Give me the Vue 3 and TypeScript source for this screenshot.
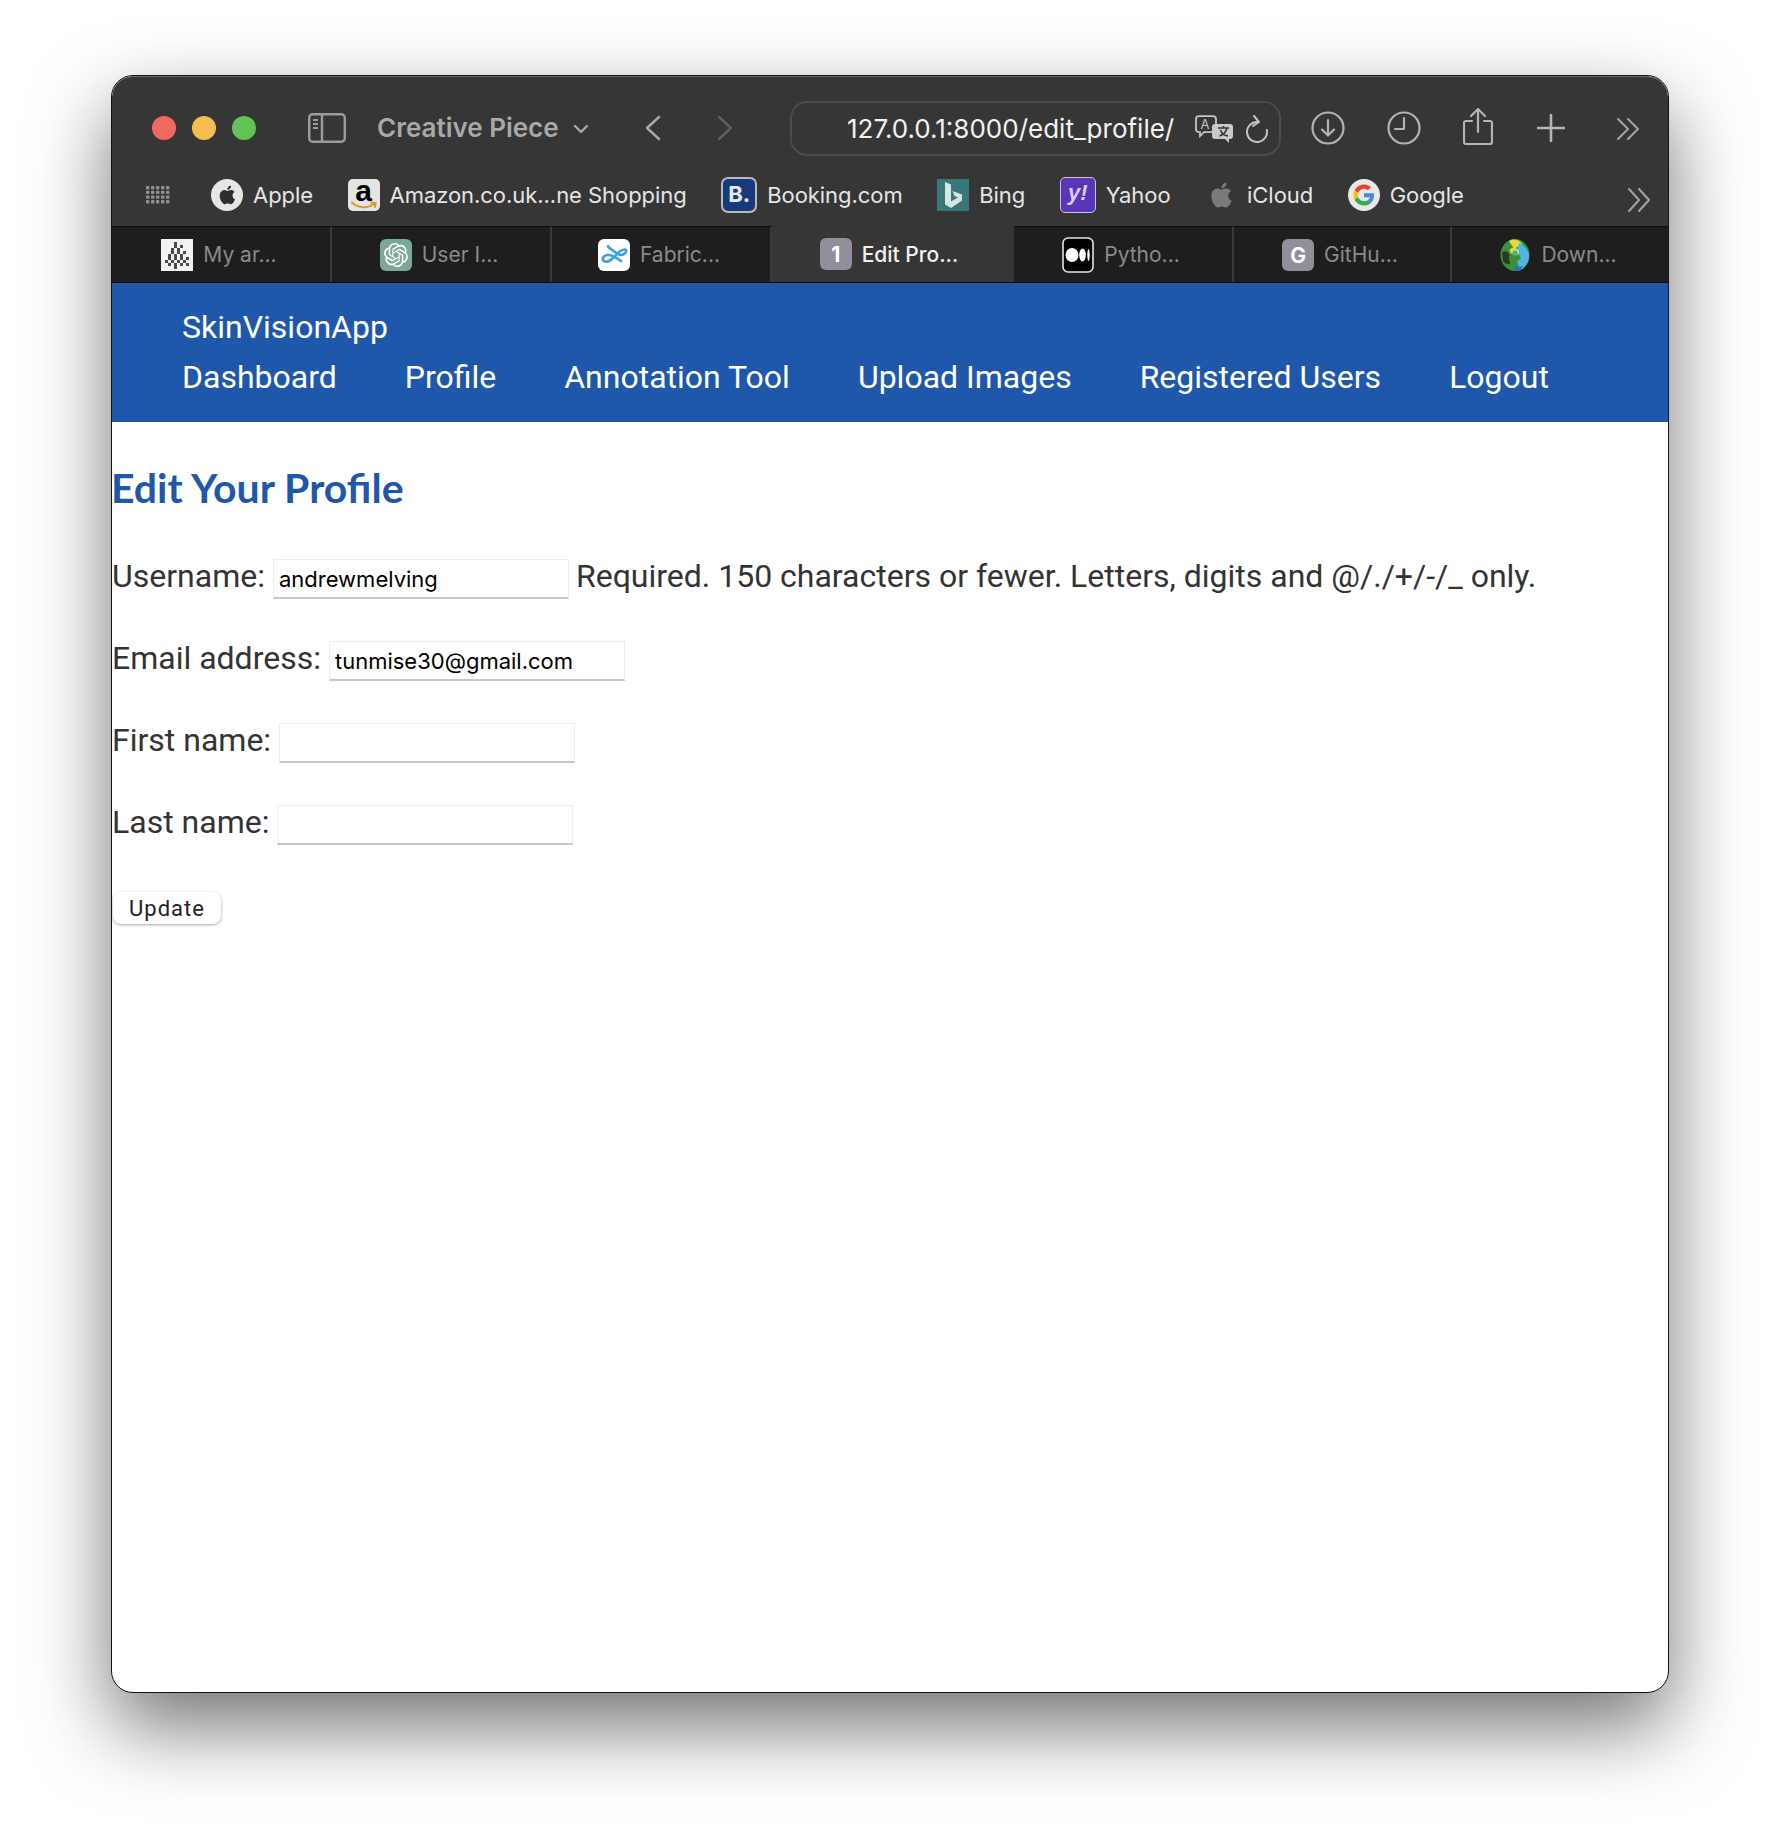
<script setup lang="ts">
const bookmarks = [
  { name: 'Apple', icon: 'apple' },
  { name: 'Amazon.co.uk...ne Shopping', icon: 'amazon' },
  { name: 'Booking.com', icon: 'booking' },
  { name: 'Bing', icon: 'bing' },
  { name: 'Yahoo', icon: 'yahoo' },
  { name: 'iCloud', icon: 'icloud' },
  { name: 'Google', icon: 'google' },
]

const tabs = [
  { name: 'My ar...', icon: 'tree' },
  { name: 'User I...', icon: 'gpt' },
  { name: 'Fabric...', icon: 'fabric' },
  { name: 'Edit Pro...', icon: 'one', active: true },
  { name: 'Pytho...', icon: 'medium' },
  { name: 'GitHu...', icon: 'github' },
  { name: 'Down...', icon: 'blob' },
]

const navLinks = ['Dashboard', 'Profile', 'Annotation Tool', 'Upload Images', 'Registered Users', 'Logout']

const applePath =
  'M12.152 6.896c-.948 0-2.415-1.078-3.96-1.04-2.04.027-3.91 1.183-4.961 3.014-2.117 3.675-.546 9.103 1.519 12.09 1.013 1.454 2.208 3.09 3.792 3.039 1.52-.065 2.09-.987 3.935-.987 1.831 0 2.35.987 3.96.948 1.637-.026 2.676-1.48 3.676-2.948 1.156-1.688 1.636-3.325 1.662-3.415-.039-.013-3.182-1.221-3.22-4.857-.026-3.04 2.48-4.494 2.597-4.559-1.429-2.09-3.623-2.324-4.39-2.376-2-.156-3.675 1.09-4.61 1.09zM15.53 3.83c.843-1.012 1.4-2.427 1.245-3.83-1.207.052-2.662.805-3.532 1.818-.78.896-1.454 2.338-1.273 3.714 1.338.104 2.715-.688 3.559-1.701'

const gptPath =
  'M22.2819 9.8211a5.9847 5.9847 0 0 0-.5157-4.9108 6.0462 6.0462 0 0 0-6.5098-2.9A6.0651 6.0651 0 0 0 4.9807 4.1818a5.9847 5.9847 0 0 0-3.9977 2.9 6.0462 6.0462 0 0 0 .7427 7.0966 5.98 5.98 0 0 0 .511 4.9107 6.051 6.051 0 0 0 6.5146 2.9001A5.9847 5.9847 0 0 0 13.2599 24a6.0557 6.0557 0 0 0 5.7718-4.2058 5.9894 5.9894 0 0 0 3.9977-2.9001 6.0557 6.0557 0 0 0-.7475-7.0729zm-9.022 12.6081a4.4755 4.4755 0 0 1-2.8764-1.0408l.1419-.0804 4.7783-2.7582a.7948.7948 0 0 0 .3927-.6813v-6.7369l2.02 1.1686a.071.071 0 0 1 .038.052v5.5826a4.504 4.504 0 0 1-4.4945 4.4944zm-9.6607-4.1254a4.4708 4.4708 0 0 1-.5346-3.0137l.142.0852 4.783 2.7582a.7712.7712 0 0 0 .7806 0l5.8428-3.3685v2.3324a.0804.0804 0 0 1-.0332.0615L9.74 19.9502a4.4992 4.4992 0 0 1-6.1408-1.6464zM2.3408 7.8956a4.485 4.485 0 0 1 2.3655-1.9728V11.6a.7664.7664 0 0 0 .3879.6765l5.8144 3.3543-2.0201 1.1685a.0757.0757 0 0 1-.071 0l-4.8303-2.7865A4.504 4.504 0 0 1 2.3408 7.872zm16.5963 3.8558L13.1038 8.364 15.1192 7.2a.0757.0757 0 0 1 .071 0l4.8303 2.7913a4.4944 4.4944 0 0 1-.6765 8.1042v-5.6772a.79.79 0 0 0-.407-.667zm2.0107-3.0231l-.142-.0852-4.7735-2.7818a.7759.7759 0 0 0-.7854 0L9.409 9.2297V6.8974a.0662.0662 0 0 1 .0284-.0615l4.8303-2.7866a4.4992 4.4992 0 0 1 6.6802 4.66zM8.3065 12.863l-2.02-1.1638a.0804.0804 0 0 1-.038-.0567V6.0742a4.4992 4.4992 0 0 1 7.3757-3.4537l-.142.0805L8.704 5.459a.7948.7948 0 0 0-.3927.6813zm1.0976-2.3654l2.602-1.4998 2.6069 1.4998v2.9994l-2.5974 1.4997-2.6067-1.4997Z'

// checker cells for the first tab's favicon, a rough tree shape
const treeCells: { x: number; y: number }[] = []
const treeWidths = [2, 4, 4, 6, 6, 8, 8, 8, 2]
treeWidths.forEach((w, row) => {
  for (let i = 0; i < w; i++) {
    if ((i + row) % 2 === 0) treeCells.push({ x: 16 - w * 1.5 + i * 3, y: 3 + row * 3 })
  }
})

const gridDots: { x: number; y: number }[] = []
for (let r = 0; r < 4; r++) {
  for (let c = 0; c < 5; c++) gridDots.push({ x: c * 5, y: r * 4.7 })
}
</script>

<template>
  <div class="page">
    <div class="window">
      <header class="toolbar">
        <div class="top-row">
          <span class="light red"></span>
          <span class="light yellow"></span>
          <span class="light green"></span>

          <svg class="sidebar-icon" width="38" height="30" viewBox="0 0 38 30" fill="none" stroke="#9c9c9c" stroke-width="2.4">
            <rect x="1.2" y="1.2" width="35.6" height="27.6" rx="3.5" />
            <path d="M14 1.2v27.6" />
            <path d="M5 7h5M5 11h5M5 15h5" stroke-width="2" />
          </svg>

          <span class="group-name">Creative Piece</span>
          <svg class="group-chevron" width="16" height="10" viewBox="0 0 16 10" fill="none" stroke="#a9a9a9" stroke-width="2.4" stroke-linecap="round" stroke-linejoin="round">
            <path d="M2 2l6 6 6-6" />
          </svg>

          <svg class="back" width="16" height="26" viewBox="0 0 16 26" fill="none" stroke="#a9a9a9" stroke-width="2.4" stroke-linecap="round" stroke-linejoin="round">
            <path d="M14 2L2 13l12 11" />
          </svg>
          <svg class="forward" width="16" height="26" viewBox="0 0 16 26" fill="none" stroke="#5e5e5e" stroke-width="2.4" stroke-linecap="round" stroke-linejoin="round">
            <path d="M2 2l12 11L2 24" />
          </svg>

          <div class="address">
            <span class="url">127.0.0.1:8000/edit_profile/</span>
            <svg class="translate" width="38" height="28" viewBox="0 0 38 28">
              <path d="M4 1.2h14a3 3 0 0 1 3 3v10a3 3 0 0 1-3 3H9l-4 4v-4H4a3 3 0 0 1-3-3v-10a3 3 0 0 1 3-3z" fill="#363636" stroke="#c4c4c4" stroke-width="1.8" />
              <text x="5.5" y="14" class="translate-a">A</text>
              <path d="M20 9h15a3 3 0 0 1 3 3v9a3 3 0 0 1-3 3h-1v4l-4-4H20a3 3 0 0 1-3-3v-9a3 3 0 0 1 3-3z" fill="#c9c9c9" />
              <path d="M23 13h11M28.5 11v2M32 13c-1 4-4 7-7.5 8M25.5 15c1 3 4 5.500 7.500 6" fill="none" stroke="#363636" stroke-width="1.600" />
            </svg>
            <svg class="reload" width="22" height="28" viewBox="0 0 22 28" fill="none" stroke="#c4c4c4" stroke-width="2" stroke-linecap="round" stroke-linejoin="round">
              <path d="M11 7a10 10 0 1 0 9.800 8" />
              <path d="M8 1l5 6-6 4" />
            </svg>
          </div>

          <svg class="tool download" width="34" height="34" viewBox="0 0 34 34" fill="none" stroke="#b4b4b4" stroke-width="2.200" stroke-linecap="round" stroke-linejoin="round">
            <circle cx="17" cy="17" r="15.500" />
            <path d="M17 9v15M11 18.500l6 6 6-6" />
          </svg>
          <svg class="tool clock" width="34" height="34" viewBox="0 0 34 34" fill="none" stroke="#b4b4b4" stroke-width="2.200" stroke-linecap="round" stroke-linejoin="round">
            <circle cx="17" cy="17" r="15.500" />
            <path d="M17 7v11H8" />
          </svg>
          <svg class="tool share" width="30" height="37" viewBox="0 0 30 37" fill="none" stroke="#b4b4b4" stroke-width="2.200" stroke-linecap="round" stroke-linejoin="round">
            <path d="M9 13H3a2 2 0 0 0-2 2v19a2 2 0 0 0 2 2h24a2 2 0 0 0 2-2V15a2 2 0 0 0-2-2h-6" />
            <path d="M15 24V2M8 8l7-7 7 7" />
          </svg>
          <svg class="tool plus" width="28" height="28" viewBox="0 0 28 28" fill="none" stroke="#b4b4b4" stroke-width="2.600" stroke-linecap="round">
            <path d="M14 1v26M1 14h26" />
          </svg>
          <svg class="tool more" width="24" height="22" viewBox="0 0 24 22" fill="none" stroke="#a4a4a4" stroke-width="2" stroke-linecap="round" stroke-linejoin="round">
            <path d="M2 1l10 10L2 21M12 1l10 10-10 10" />
          </svg>
        </div>

        <div class="bookmarks">
          <svg class="grid-icon" width="24" height="18" viewBox="0 0 24 18" fill="#8f8f8f">
            <rect v-for="(d, i) in gridDots" :key="i" :x="d.x" :y="d.y" width="3.400" height="3.400" rx="0.800" />
          </svg>

          <div v-for="b in bookmarks" :key="b.name" class="bookmark">
            <svg v-if="b.icon === 'apple'" class="fav" width="32" height="32" viewBox="0 0 32 32">
              <circle cx="16" cy="16" r="16" fill="#e6e6e6" />
              <path :d="applePath" fill="#2e2e2e" transform="translate(7 6.500) scale(.78)" />
            </svg>
            <span v-else-if="b.icon === 'amazon'" class="fav amazon">
              a
              <svg width="26" height="9" viewBox="0 0 26 9" fill="none" stroke="#e0992e" stroke-width="2" stroke-linecap="round">
                <path d="M1 1.500c6 6 16 6 22 1.500M20 1.500l4.500.5-.5 4" />
              </svg>
            </span>
            <span v-else-if="b.icon === 'booking'" class="fav booking">B.</span>
            <svg v-else-if="b.icon === 'bing'" class="fav" width="32" height="32" viewBox="0 0 32 32">
              <rect width="32" height="32" fill="#38787a" />
              <path d="M8 3l6 2.500v17l7-4-3.500-1.500-2-5L25 15.500v6L14 29l-6-3.500z" fill="#d5e6e4" />
            </svg>
            <span v-else-if="b.icon === 'yahoo'" class="fav yahoo">y!</span>
            <svg v-else-if="b.icon === 'icloud'" class="fav" width="32" height="32" viewBox="0 0 32 32">
              <path :d="applePath" fill="#7a7a7a" transform="translate(4 3.500) scale(1.040)" />
            </svg>
            <svg v-else class="fav" width="32" height="32" viewBox="0 0 32 32">
              <circle cx="16" cy="16" r="16" fill="#e8e8e8" />
              <g transform="translate(5.500 5.500) scale(.4375)">
                <path fill="#EA4335" d="M24 9.500c3.540 0 6.710 1.220 9.210 3.600l6.850-6.850C35.900 2.380 30.470 0 24 0 14.620 0 6.510 5.380 2.560 13.220l7.980 6.190C12.430 13.720 17.740 9.500 24 9.500z" />
                <path fill="#4285F4" d="M46.980 24.550c0-1.570-.15-3.090-.38-4.550H24v9.020h12.940c-.58 2.960-2.260 5.480-4.780 7.180l7.730 6c4.510-4.180 7.090-10.360 7.090-17.650z" />
                <path fill="#FBBC05" d="M10.530 28.590c-.48-1.450-.76-2.990-.76-4.590s.27-3.140.76-4.590l-7.980-6.190C.92 16.460 0 20.120 0 24c0 3.880.92 7.540 2.560 10.780l7.970-6.190z" />
                <path fill="#34A853" d="M24 48c6.480 0 11.930-2.130 16.030-5.810l-7.730-6c-2.150 1.450-4.920 2.300-8.300 2.300-6.260 0-11.570-4.220-13.470-9.910l-7.980 6.190C6.510 42.620 14.620 48 24 48z" />
              </g>
            </svg>
            <span class="bookmark-name">{{ b.name }}</span>
          </div>

          <svg class="bookmarks-more" width="24" height="24" viewBox="0 0 24 24" fill="none" stroke="#a4a4a4" stroke-width="2" stroke-linecap="round" stroke-linejoin="round">
            <path d="M2 1l10 11L2 23M12 1l10 11-10 11" />
          </svg>
        </div>
      </header>

      <div class="tabs">
        <div v-for="t in tabs" :key="t.name" class="tab" :class="{ active: t.active }">
          <svg v-if="t.icon === 'tree'" class="fav" width="32" height="32" viewBox="0 0 32 32">
            <rect width="32" height="32" fill="#f2f2f2" />
            <rect v-for="(c, i) in treeCells" :key="i" :x="c.x" :y="c.y" width="3" height="3" fill="#4a4a4a" />
          </svg>
          <svg v-else-if="t.icon === 'gpt'" class="fav" width="32" height="32" viewBox="0 0 32 32">
            <rect width="32" height="32" rx="6" fill="#7ba898" />
            <path :d="gptPath" fill="#fff" transform="translate(4 4)" />
          </svg>
          <svg v-else-if="t.icon === 'fabric'" class="fav" width="32" height="32" viewBox="0 0 32 32">
            <rect width="32" height="32" rx="6" fill="#fff" />
            <path d="M5 21c2 3 6 2 10-2l6-6c3-2 6-3 7-2 1 2-2 5-5 5-3 0-6-3-10-6-2-1-3-2-3-3" fill="none" stroke="#3c9fe0" stroke-width="2.600" stroke-linecap="round" />
            <path d="M5 21c-1-3 2-5 5-5 4 0 9 3 13 6" fill="none" stroke="#3c9fe0" stroke-width="2.600" stroke-linecap="round" />
          </svg>
          <span v-else-if="t.icon === 'one'" class="fav letter">1</span>
          <svg v-else-if="t.icon === 'medium'" class="fav" width="32" height="36" viewBox="0 0 32 36">
            <rect x="1" y="1" width="30" height="34" rx="5" fill="#000" stroke="#e6e6e6" stroke-width="1.600" />
            <ellipse cx="10" cy="18" rx="6.500" ry="7" fill="#fff" />
            <ellipse cx="20.500" cy="18" rx="3.300" ry="6.500" fill="#fff" />
            <ellipse cx="26.500" cy="18" rx="1.200" ry="6" fill="#fff" />
          </svg>
          <span v-else-if="t.icon === 'github'" class="fav letter">G</span>
          <svg v-else class="fav" width="32" height="32" viewBox="0 0 32 32">
            <ellipse cx="16" cy="16" rx="14.500" ry="16" fill="#3f8f3a" />
            <path d="M10 2c5-3 11-1 13 3l-8 5z" fill="#e2da3a" />
            <path d="M20 4c5 2 10 7 10 13s-3 11-8 14l-4-8 4-4-4-7z" fill="#4fb6e6" />
            <path d="M16 27c2 1 5 1 8 0l-3 5c-2 1-5 0-6-1z" fill="#2a6fc4" />
            <path d="M3 14c2-3 6-2 7 1s-1 5 1 8-5 3-7-1z" fill="#2a3a1e" />
            <path d="M11 10c3-2 8-1 9 2s-2 5-5 4-5-4-4-6z" fill="#d9e04a" />
            <circle cx="16" cy="14" r="2.600" fill="#3fb39a" />
          </svg>
          <span class="tab-name">{{ t.name }}</span>
        </div>
      </div>

      <nav class="navbar">
        <div class="brand">SkinVisionApp</div>
        <div class="nav-links">
          <a v-for="link in navLinks" :key="link" class="nav-link">{{ link }}</a>
        </div>
      </nav>

      <main class="content">
        <h2 class="title">Edit Your Profile</h2>
        <form @submit.prevent>
          <p class="field">
            <label>Username:</label>
            <input type="text" value="andrewmelving" />
            <span>Required. 150 characters or fewer. Letters, digits and @/./+/-/_ only.</span>
          </p>
          <p class="field">
            <label>Email address:</label>
            <input type="email" value="tunmise30@gmail.com" />
          </p>
          <p class="field">
            <label>First name:</label>
            <input type="text" />
          </p>
          <p class="field">
            <label>Last name:</label>
            <input type="text" />
          </p>
          <button class="submit" type="submit">Update</button>
        </form>
      </main>
    </div>
  </div>
</template>

<style>
html,
body {
  margin: 0;
  background: #fff;
  overflow: hidden;
}
</style>

<style scoped>
.page {
  box-sizing: border-box;
  height: 1840px;
  padding: 75px 111px 147px 111px;
  font-family: Inter, "Liberation Sans", sans-serif;
}

.window {
  box-sizing: border-box;
  height: 100%;
  display: flex;
  flex-direction: column;
  background: #fff;
  border: 1px solid #111;
  border-radius: 22px;
  overflow: hidden;
  box-shadow: 0 34px 80px rgba(0, 0, 0, 0.55);
}

.toolbar {
  height: 150px;
  flex: none;
  display: flex;
  flex-direction: column;
  background: #363636;
  border-radius: 21px 21px 0 0;
  box-shadow: inset 0 1px 0 #6d6d6d;
}

.top-row {
  height: 101px;
  flex: none;
  display: flex;
  align-items: center;
  padding-top: 2px;
  box-sizing: border-box;
  padding-left: 40px;
}

.light {
  width: 24px;
  height: 24px;
  border-radius: 50%;
  margin-right: 16px;
  flex: none;
}
.red { background: #ee6a5f; }
.yellow { background: #f5bd4f; }
.green { background: #61c454; }

.sidebar-icon {
  margin-left: 36px;
  flex: none;
}

.group-name {
  margin-left: 31px;
  width: 181px;
  font-size: 26px;
  font-weight: 600;
  color: #a9a9a9;
  white-space: nowrap;
}

.group-chevron {
  margin-left: 15px;
  margin-top: 2px;
}

.back {
  margin-left: 56px;
}

.forward {
  margin-left: 56px;
}

.address {
  box-sizing: border-box;
  width: 491px;
  height: 55px;
  margin-left: 57px;
  margin-top: 2px;
  flex: none;
  display: flex;
  align-items: center;
  padding-left: 55px;
  border: 2px solid #4c4c4c;
  border-radius: 17px;
}

.url {
  width: 348px;
  font-size: 26px;
  color: #f2f2f2;
  white-space: nowrap;
}

.translate-a {
  font-size: 13px;
  fill: #c4c4c4;
  font-family: Inter, sans-serif;
}

.reload {
  margin-left: 13px;
}

.tool {
  flex: none;
}
.download { margin-left: 30px; }
.clock { margin-left: 42px; }
.share { margin-left: 42px; margin-top: -3px; }
.plus { margin-left: 44px; }
.more { margin-left: 51px; margin-top: 3px; }

.bookmarks {
  height: 49px;
  flex: none;
  display: flex;
  align-items: center;
  padding-left: 34px;
  padding-bottom: 14px;
  box-sizing: border-box;
}

.grid-icon {
  margin-right: 41px;
  flex: none;
}

.bookmark {
  display: flex;
  align-items: center;
  gap: 10px;
  margin-right: 34.500px;
  flex: none;
}

.bookmark-name {
  font-size: 22px;
  letter-spacing: -0.05px;
  color: #e6e6e6;
  white-space: nowrap;
}

.bookmarks-more {
  margin-left: auto;
  margin-right: 17px;
  margin-top: 10px;
}

.fav {
  flex: none;
  display: block;
}

.amazon {
  width: 32px;
  height: 32px;
  box-sizing: border-box;
  border-radius: 5px;
  background: #e4e4e4;
  color: #000;
  font: 700 30px/24px "Liberation Sans", sans-serif;
  text-align: center;
  position: relative;
}
.amazon svg {
  position: absolute;
  left: 3px;
  bottom: 1px;
}

.booking {
  width: 36px;
  height: 36px;
  box-sizing: border-box;
  border: 2px solid #b9b9b9;
  border-radius: 7px;
  background: #17397f;
  color: #e8e8e8;
  font: 700 22px/31px Inter, sans-serif;
  text-align: center;
}

.yahoo {
  width: 36px;
  height: 36px;
  box-sizing: border-box;
  border: 1.500px solid #c8c8c8;
  border-radius: 5px;
  background: #5a35b8;
  color: #d9cff5;
  font: italic 700 22px/30px "Liberation Sans", sans-serif;
  text-align: center;
}

.tabs {
  height: 57px;
  flex: none;
  display: grid;
  grid-template-columns: 220px 220px 220px 242px 220px 218px 1fr;
  background: #1e1e1e;
  border-top: 1px solid #0c0c0c;
  border-bottom: 1px solid #0c0c0c;
  box-sizing: border-box;
}

.tab {
  display: flex;
  align-items: center;
  justify-content: center;
  gap: 10px;
  padding-right: 4px;
  border-right: 2px solid #3a3a3a;
  box-sizing: border-box;
}
.tab:last-child {
  border-right: 0;
}

.tab.active {
  background: #363636;
  margin-top: -1px;
  border-right: 0;
  padding-right: 8px;
}

.tab-name {
  font-size: 21px;
  color: #8b8b8b;
  white-space: nowrap;
}
.tab.active .tab-name {
  color: #f2f2f2;
  font-weight: 500;
}

.letter {
  width: 32px;
  height: 32px;
  border-radius: 6px;
  background: #90909c;
  color: #fff;
  font: 700 21px/34px Inter, sans-serif;
  text-align: center;
}

.navbar {
  height: 139px;
  flex: none;
  box-sizing: border-box;
  background: #1f57ab;
  padding: 19px 70px 0;
  font-family: Roboto, sans-serif;
  color: #fff;
  font-size: 32px;
}

.brand {
  line-height: 50px;
}

.nav-links {
  display: flex;
  gap: 68px;
  line-height: 50px;
}

.nav-link {
  color: #fff;
  white-space: nowrap;
}

.content {
  flex: 1;
  color: #333;
  font-family: Roboto, sans-serif;
  font-size: 32px;
}

.title {
  margin: 43px 0 0 -1px;
  font-family: Lato, sans-serif;
  font-size: 41px;
  line-height: 46px;
  font-weight: 700;
  color: #1f57ab;
}

.field {
  margin: 0;
  height: 82px;
  line-height: 40px;
}
.title + form {
  margin-top: 45px;
}

.field input {
  box-sizing: border-box;
  width: 296px;
  height: 40px;
  padding: 2px 5px 0;
  margin: 0 7px 0 8px;
  background: #fff;
  border: 1px solid #eee;
  border-bottom: 2px solid #c8c8c8;
  border-radius: 0;
  outline: none;
  font-family: Inter, sans-serif;
  font-size: 22px;
  color: #000;
  vertical-align: middle;
}

.submit {
  width: 108px;
  height: 32px;
  margin-top: 8px;
  padding: 0;
  background: #fff;
  border: 0;
  border-radius: 8px;
  box-shadow: 0 1px 3px rgba(0, 0, 0, 0.35);
  font-family: Roboto, sans-serif;
  font-size: 22px;
  letter-spacing: 1px;
  color: #222;
  display: block;
  margin-left: 1px;
}
</style>
